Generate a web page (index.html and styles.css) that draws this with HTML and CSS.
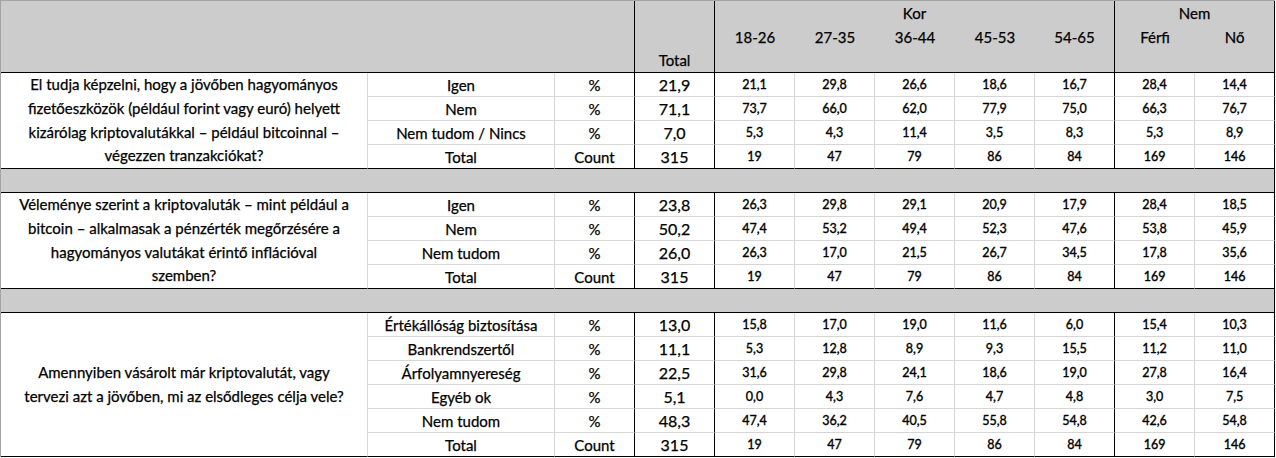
FILE: index.html
```html
<!DOCTYPE html>
<html lang="hu">
<head>
<meta charset="utf-8">
<title>Kriptovaluta kereszttábla</title>
<link rel="stylesheet" href="styles.css">
</head>
<body>
<table class="xtab">
  <colgroup>
    <col class="w-q"><col class="w-ans"><col class="w-unit"><col class="w-tot">
    <col class="w-num"><col class="w-num"><col class="w-num"><col class="w-num"><col class="w-num">
    <col class="w-num"><col class="w-num">
  </colgroup>
  <thead>
    <tr class="row">
      <th class="hd hd-blank" colspan="3" rowspan="3"></th>
      <th class="hd hd-total" rowspan="3">Total</th>
      <th class="hd hd-group rb" colspan="5">Kor</th>
      <th class="hd hd-group rb" colspan="2">Nem</th>
    </tr>
    <tr class="row">
      <th class="hd">18-26</th><th class="hd">27-35</th><th class="hd">36-44</th><th class="hd">45-53</th><th class="hd rb">54-65</th>
      <th class="hd">Férfi</th><th class="hd rb">Nő</th>
    </tr>
    <tr class="row">
      <th class="hd rb bb" colspan="5"></th><th class="hd rb bb" colspan="2"></th>
    </tr>
  </thead>
  <tbody>
    <tr class="row">
      <td class="q bb" rowspan="4">El tudja képzelni, hogy a jövőben hagyományos<br>fizetőeszközök (például forint vagy euró) helyett<br>kizárólag kriptovalutákkal – például bitcoinnal –<br>végezzen tranzakciókat?</td>
      <td class="ans">Igen</td><td class="unit">%</td><td class="tot">21,9</td>
      <td class="num">21,1</td><td class="num">29,8</td><td class="num">26,6</td><td class="num">18,6</td><td class="num rb">16,7</td>
      <td class="num">28,4</td><td class="num rb">14,4</td>
    </tr>
    <tr class="row">
      <td class="ans">Nem</td><td class="unit">%</td><td class="tot">71,1</td>
      <td class="num">73,7</td><td class="num">66,0</td><td class="num">62,0</td><td class="num">77,9</td><td class="num rb">75,0</td>
      <td class="num">66,3</td><td class="num rb">76,7</td>
    </tr>
    <tr class="row">
      <td class="ans">Nem tudom / Nincs</td><td class="unit">%</td><td class="tot">7,0</td>
      <td class="num">5,3</td><td class="num">4,3</td><td class="num">11,4</td><td class="num">3,5</td><td class="num rb">8,3</td>
      <td class="num">5,3</td><td class="num rb">8,9</td>
    </tr>
    <tr class="row last">
      <td class="ans">Total</td><td class="unit">Count</td><td class="tot">315</td>
      <td class="num">19</td><td class="num">47</td><td class="num">79</td><td class="num">86</td><td class="num rb">84</td>
      <td class="num">169</td><td class="num rb">146</td>
    </tr>
    <tr class="row"><td class="gap" colspan="11"></td></tr>

    <tr class="row">
      <td class="q bb" rowspan="4">Véleménye szerint a kriptovaluták – mint például a<br>bitcoin – alkalmasak a pénzérték megőrzésére a<br>hagyományos valutákat érintő inflációval<br>szemben?</td>
      <td class="ans">Igen</td><td class="unit">%</td><td class="tot">23,8</td>
      <td class="num">26,3</td><td class="num">29,8</td><td class="num">29,1</td><td class="num">20,9</td><td class="num rb">17,9</td>
      <td class="num">28,4</td><td class="num rb">18,5</td>
    </tr>
    <tr class="row">
      <td class="ans">Nem</td><td class="unit">%</td><td class="tot">50,2</td>
      <td class="num">47,4</td><td class="num">53,2</td><td class="num">49,4</td><td class="num">52,3</td><td class="num rb">47,6</td>
      <td class="num">53,8</td><td class="num rb">45,9</td>
    </tr>
    <tr class="row">
      <td class="ans">Nem tudom</td><td class="unit">%</td><td class="tot">26,0</td>
      <td class="num">26,3</td><td class="num">17,0</td><td class="num">21,5</td><td class="num">26,7</td><td class="num rb">34,5</td>
      <td class="num">17,8</td><td class="num rb">35,6</td>
    </tr>
    <tr class="row last">
      <td class="ans">Total</td><td class="unit">Count</td><td class="tot">315</td>
      <td class="num">19</td><td class="num">47</td><td class="num">79</td><td class="num">86</td><td class="num rb">84</td>
      <td class="num">169</td><td class="num rb">146</td>
    </tr>
    <tr class="row"><td class="gap" colspan="11"></td></tr>

    <tr class="row">
      <td class="q bb" rowspan="6">Amennyiben vásárolt már kriptovalutát, vagy<br>tervezi azt a jövőben, mi az elsődleges célja vele?</td>
      <td class="ans">Értékállóság biztosítása</td><td class="unit">%</td><td class="tot">13,0</td>
      <td class="num">15,8</td><td class="num">17,0</td><td class="num">19,0</td><td class="num">11,6</td><td class="num rb">6,0</td>
      <td class="num">15,4</td><td class="num rb">10,3</td>
    </tr>
    <tr class="row">
      <td class="ans">Bankrendszertől</td><td class="unit">%</td><td class="tot">11,1</td>
      <td class="num">5,3</td><td class="num">12,8</td><td class="num">8,9</td><td class="num">9,3</td><td class="num rb">15,5</td>
      <td class="num">11,2</td><td class="num rb">11,0</td>
    </tr>
    <tr class="row">
      <td class="ans">Árfolyamnyereség</td><td class="unit">%</td><td class="tot">22,5</td>
      <td class="num">31,6</td><td class="num">29,8</td><td class="num">24,1</td><td class="num">18,6</td><td class="num rb">19,0</td>
      <td class="num">27,8</td><td class="num rb">16,4</td>
    </tr>
    <tr class="row">
      <td class="ans">Egyéb ok</td><td class="unit">%</td><td class="tot">5,1</td>
      <td class="num">0,0</td><td class="num">4,3</td><td class="num">7,6</td><td class="num">4,7</td><td class="num rb">4,8</td>
      <td class="num">3,0</td><td class="num rb">7,5</td>
    </tr>
    <tr class="row">
      <td class="ans">Nem tudom</td><td class="unit">%</td><td class="tot">48,3</td>
      <td class="num">47,4</td><td class="num">36,2</td><td class="num">40,5</td><td class="num">55,8</td><td class="num rb">54,8</td>
      <td class="num">42,6</td><td class="num rb">54,8</td>
    </tr>
    <tr class="row last">
      <td class="ans">Total</td><td class="unit">Count</td><td class="tot">315</td>
      <td class="num">19</td><td class="num">47</td><td class="num">79</td><td class="num">86</td><td class="num rb">84</td>
      <td class="num">169</td><td class="num rb">146</td>
    </tr>
  </tbody>
</table>
</body>
</html>
```
FILE: styles.css
```css
html, body {
  margin: 0;
  padding: 0;
  background: #ffffff;
}

body {
  font-family: "Lato", "Liberation Sans", sans-serif;
  color: #000000;
  -webkit-text-stroke: 0.25px #000000;
}

.xtab {
  border-collapse: separate;
  border-spacing: 0;
  table-layout: fixed;
  width: 1275px;
  border-top: 1px solid #a3a3a3;
  border-left: 1px solid #a3a3a3;
}

.w-q { width: 367px; }
.w-ans { width: 187px; }
.w-unit { width: 80px; }
.w-tot { width: 80px; }
.w-num { width: 80px; }

.row { height: 24px; }

.xtab th,
.xtab td {
  padding: 0;
  text-align: center;
  vertical-align: middle;
  font-weight: normal;
  white-space: nowrap;
  overflow: hidden;
}

/* header */
.hd {
  background: #cccccc;
  font-size: 15px;
  line-height: 20px;
}
.hd-blank {
  border-right: 1px solid #000;
  border-bottom: 1px solid #000;
}
.hd-total {
  border-right: 1px solid #000;
  border-bottom: 1px solid #000;
  vertical-align: bottom !important;
  padding-bottom: 2px !important;
}

/* body cells */
.q, .ans, .unit, .tot, .num {
  border-right: 1px solid #d6d6d6;
  border-bottom: 1px solid #d6d6d6;
  line-height: 20px;
}
.q {
  font-size: 15px;
  line-height: 23.75px;
  white-space: normal !important;
}
.ans, .unit { font-size: 15px; }
.unit, .tot { border-right-color: #000; }
.tot { font-size: 16px; }
.num {
  font-size: 12.5px;
  -webkit-text-stroke: 0.35px #000000;
}

.rb { border-right: 1px solid #000; }
.bb { border-bottom: 1px solid #000 !important; }
.last > td { border-bottom-color: #000; }

.gap {
  background: #cccccc;
  border-right: 1px solid #000;
  border-bottom: 1px solid #000;
}
```
